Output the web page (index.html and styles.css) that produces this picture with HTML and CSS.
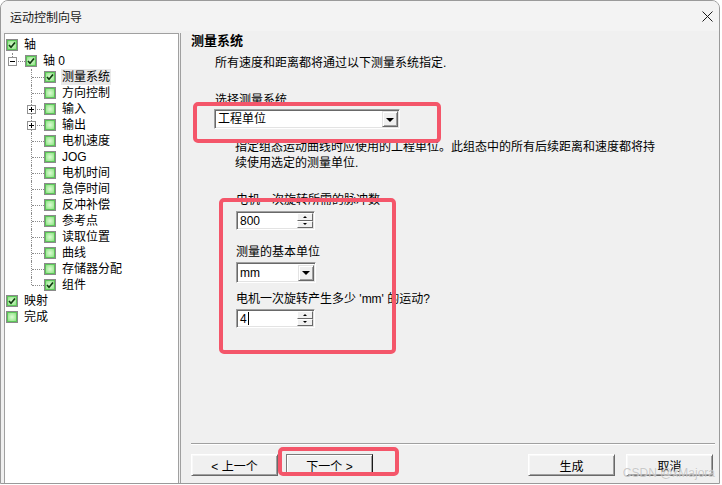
FILE: index.html
```html
<!DOCTYPE html>
<html lang="zh-CN">
<head>
  <meta charset="UTF-8" />
  <title>运动控制向导</title>
  <link rel="stylesheet" href="styles.css">
</head>
<body>
  <div class="window">
    <div class="titlebar">
      <span class="title">运动控制向导</span>
      <svg class="close" width="11" height="11" viewBox="0 0 11 11">
        <path d="M0.5 0.5 L10.5 10.5 M10.5 0.5 L0.5 10.5" stroke="#1a1a1a" stroke-width="1" fill="none"/>
      </svg>
    </div>

    <div class="client">
      <div class="tree">
        <div class="row">
          <span class="chk on"><svg width="8" height="8" viewBox="0 0 8 8"><polyline points="1,4 3,6.2 7,1.5" stroke="#103a10" stroke-width="1.7" fill="none"/></svg></span>
          <span class="label">轴</span>
        </div>
        <div class="row">
          <span class="guide end"><span class="expander"></span></span>
          <span class="chk on"><svg width="8" height="8" viewBox="0 0 8 8"><polyline points="1,4 3,6.2 7,1.5" stroke="#103a10" stroke-width="1.7" fill="none"/></svg></span>
          <span class="label">轴 0</span>
        </div>
        <div class="row">
          <span class="guide"></span><span class="guide tee"></span>
          <span class="chk on"><svg width="8" height="8" viewBox="0 0 8 8"><polyline points="1,4 3,6.2 7,1.5" stroke="#103a10" stroke-width="1.7" fill="none"/></svg></span>
          <span class="label selected">测量系统</span>
        </div>
        <div class="row">
          <span class="guide"></span><span class="guide tee"></span>
          <span class="chk"></span><span class="label">方向控制</span>
        </div>
        <div class="row">
          <span class="guide"></span><span class="guide tee"><span class="expander plus"></span></span>
          <span class="chk"></span><span class="label">输入</span>
        </div>
        <div class="row">
          <span class="guide"></span><span class="guide tee"><span class="expander plus"></span></span>
          <span class="chk"></span><span class="label">输出</span>
        </div>
        <div class="row">
          <span class="guide"></span><span class="guide tee"></span>
          <span class="chk"></span><span class="label">电机速度</span>
        </div>
        <div class="row">
          <span class="guide"></span><span class="guide tee"></span>
          <span class="chk"></span><span class="label">JOG</span>
        </div>
        <div class="row">
          <span class="guide"></span><span class="guide tee"></span>
          <span class="chk"></span><span class="label">电机时间</span>
        </div>
        <div class="row">
          <span class="guide"></span><span class="guide tee"></span>
          <span class="chk"></span><span class="label">急停时间</span>
        </div>
        <div class="row">
          <span class="guide"></span><span class="guide tee"></span>
          <span class="chk"></span><span class="label">反冲补偿</span>
        </div>
        <div class="row">
          <span class="guide"></span><span class="guide tee"></span>
          <span class="chk"></span><span class="label">参考点</span>
        </div>
        <div class="row">
          <span class="guide"></span><span class="guide tee"></span>
          <span class="chk"></span><span class="label">读取位置</span>
        </div>
        <div class="row">
          <span class="guide"></span><span class="guide tee"></span>
          <span class="chk"></span><span class="label">曲线</span>
        </div>
        <div class="row">
          <span class="guide"></span><span class="guide tee"></span>
          <span class="chk"></span><span class="label">存储器分配</span>
        </div>
        <div class="row">
          <span class="guide"></span><span class="guide end"></span>
          <span class="chk on"><svg width="8" height="8" viewBox="0 0 8 8"><polyline points="1,4 3,6.2 7,1.5" stroke="#103a10" stroke-width="1.7" fill="none"/></svg></span>
          <span class="label">组件</span>
        </div>
        <div class="row">
          <span class="chk on"><svg width="8" height="8" viewBox="0 0 8 8"><polyline points="1,4 3,6.2 7,1.5" stroke="#103a10" stroke-width="1.7" fill="none"/></svg></span>
          <span class="label">映射</span>
        </div>
        <div class="row">
          <span class="chk"></span><span class="label">完成</span>
        </div>
      </div>

      <div class="page">
        <h1 class="page-title">测量系统</h1>
        <p class="intro">所有速度和距离都将通过以下测量系统指定.</p>

        <div class="field-label first">选择测量系统</div>
        <div class="combo wide">
          <span>工程单位</span>
          <span class="combo-btn"></span>
        </div>

        <p class="hint">指定组态运动曲线时应使用的工程单位。此组态中的所有后续距离和速度都将持<br>续使用选定的测量单位.</p>

        <div class="units">
          <div class="field-label pulses">电机一次旋转所需的脉冲数</div>
          <div class="spin">
            <span>800</span>
            <span class="spin-btns"><span class="up"></span><span class="down"></span></span>
          </div>

          <div class="field-label base">测量的基本单位</div>
          <div class="combo small">
            <span>mm</span>
            <span class="combo-btn"></span>
          </div>

          <div class="field-label travel">电机一次旋转产生多少 'mm' 的运动?</div>
          <div class="spin">
            <span>4</span><span class="caret"></span>
            <span class="spin-btns"><span class="up"></span><span class="down"></span></span>
          </div>
        </div>

        <div class="footer">
          <div class="separator"></div>
          <div class="buttons">
            <button class="btn">&lt; 上一个</button>
            <button class="btn default">下一个 &gt;</button>
            <span class="fill"></span>
            <button class="btn">生成</button>
            <button class="btn cancel">取消</button>
          </div>
        </div>

        <!-- annotation boxes drawn over the dialog -->
        <div class="mark mark-system"></div>
        <div class="mark mark-units"></div>
        <div class="mark mark-next"></div>
      </div>
    </div>

    <div class="watermark">CSDN @xMajora</div>
  </div>
</body>
</html>
```

FILE: styles.css
```css
* {
  box-sizing: border-box;
}

html, body {
  margin: 0;
  padding: 0;
  background-color: #fff;
}

body {
  font-family: "Liberation Sans", "Noto Sans CJK SC", sans-serif;
  font-size: 12px;
  color: #000;
}

.window {
  position: relative;
  width: 720px;
  height: 484px;
  border: 1px solid #9a9a9a;
  border-radius: 8px 8px 0 0;
  background-color: #f0f0f0;
  display: flex;
  flex-direction: column;
  overflow: hidden;
}

.titlebar {
  height: 30px;
  flex: none;
  background-color: #f3f3f3;
  display: flex;
  align-items: center;
  justify-content: space-between;
  padding: 0 6px 0 9px;
}

.title {
  font-size: 12px;
  color: #1a1a1a;
}

.close {
  display: block;
}

.client {
  flex: 1;
  display: flex;
  min-height: 0;
}

/* tree on the left */
.tree {
  width: 175px;
  flex: none;
  margin: 2px 1px 0 3px;
  padding-top: 3px;
  background-color: #fff;
  border: 1px solid #a0a0a0;
  border-bottom: none;
}

.row {
  display: flex;
  align-items: center;
  height: 16px;
  padding-left: 1px;
}

.guide {
  position: relative;
  width: 19px;
  height: 16px;
  flex: none;
}

.guide.tee::before,
.guide.end::before {
  content: "";
  position: absolute;
  left: 6px;
  top: 0;
  bottom: 0;
  border-left: 1px dotted #8c8c8c;
}

.guide.end::before {
  bottom: 8px;
}

.guide.tee::after,
.guide.end::after {
  content: "";
  position: absolute;
  left: 7px;
  top: 8px;
  width: 12px;
  border-top: 1px dotted #8c8c8c;
}

.expander {
  position: absolute;
  left: 2px;
  top: 4px;
  width: 9px;
  height: 9px;
  border: 1px solid #919191;
  background-color: #fff;
  z-index: 1;
}

.expander::before {
  content: "";
  position: absolute;
  left: 1px;
  top: 3px;
  width: 5px;
  height: 1px;
  background-color: #000;
}

.expander.plus::after {
  content: "";
  position: absolute;
  left: 3px;
  top: 1px;
  width: 1px;
  height: 5px;
  background-color: #000;
}

.chk {
  width: 12px;
  height: 12px;
  flex: none;
  border: 1px solid #8a8a8a;
  background: radial-gradient(circle, #dcfbd4 0, #a6eb9c 55%, #6fd665 100%);
  box-shadow: inset 0 0 0 1px #5cc459;
  display: flex;
  align-items: center;
  justify-content: center;
}

.chk svg {
  display: block;
}

.label {
  margin-left: 5px;
  padding: 0 1px;
  line-height: 16px;
  white-space: nowrap;
}

.label.selected {
  background-color: #e9e9e9;
}

/* page on the right */
.page {
  position: relative;
  flex: 1;
  margin-top: 2px;
  border-left: 1px solid #a0a0a0;
  padding: 0 4px 7px 10px;
  display: flex;
  flex-direction: column;
}

.page-title {
  margin: 0;
  font-size: 13px;
  font-weight: bold;
  line-height: 15px;
}

.intro {
  margin: 7px 0 0 24px;
  line-height: 16px;
}

.field-label {
  line-height: 16px;
  white-space: nowrap;
}

.field-label.first {
  margin: 21px 0 0 24px;
}

.hint {
  margin: 10px 0 0 44px;
  line-height: 16px;
}

.units {
  margin-left: 45px;
}

.field-label.pulses {
  margin-top: 21px;
}

.field-label.base {
  margin-top: 14px;
}

.field-label.travel {
  margin-top: 8px;
}

.combo,
.spin {
  display: flex;
  align-items: center;
  background-color: #fff;
  border: 1px solid;
  border-color: #a0a0a0 #fff #fff #a0a0a0;
  box-shadow: inset 1px 1px 0 #696969, inset -1px -1px 0 #e3e3e3;
  padding-left: 3px;
  line-height: 14px;
}

.combo.wide {
  width: 186px;
  height: 20px;
  margin: 1px 0 0 23px;
}

.combo.small {
  width: 80px;
  height: 21px;
  margin-top: 2px;
}

.spin {
  width: 79px;
  height: 19px;
  margin-top: 3px;
}

.field-label.travel + .spin {
  margin-top: 2px;
}

.combo-btn {
  margin-left: auto;
  margin-right: 1px;
  width: 16px;
  height: 16px;
  flex: none;
  background-color: #f0f0f0;
  border: 1px solid;
  border-color: #e3e3e3 #696969 #696969 #e3e3e3;
  box-shadow: inset 1px 1px 0 #fff, inset -1px -1px 0 #a0a0a0;
  display: flex;
  align-items: center;
  justify-content: center;
}

.combo-btn::before {
  content: "";
  border-left: 4px solid transparent;
  border-right: 4px solid transparent;
  border-top: 4px solid #000;
  margin-top: 1px;
}

.caret {
  width: 1px;
  height: 13px;
  background-color: #000;
  margin-left: 1px;
}

.spin-btns {
  margin-left: auto;
  margin-right: 1px;
  width: 16px;
  height: 15px;
  flex: none;
  display: flex;
  flex-direction: column;
}

.spin-btns span {
  flex: 1;
  background-color: #f0f0f0;
  border: 1px solid;
  border-color: #fff #696969 #696969 #fff;
  display: flex;
  align-items: center;
  justify-content: center;
}

.spin-btns .up::before {
  content: "";
  border-left: 2px solid transparent;
  border-right: 2px solid transparent;
  border-bottom: 2px solid #000;
}

.spin-btns .down::before {
  content: "";
  border-left: 2px solid transparent;
  border-right: 2px solid transparent;
  border-top: 2px solid #000;
}

.footer {
  margin-top: auto;
}

.separator {
  height: 2px;
  border-top: 1px solid #a0a0a0;
  border-bottom: 1px solid #fff;
}

.buttons {
  display: flex;
  margin-top: 9px;
  padding-right: 2px;
}

.fill {
  flex: 1;
}

.btn {
  width: 87px;
  height: 22px;
  padding: 0;
  font: inherit;
  color: #000;
  background-color: #f0f0f0;
  border: 1px solid;
  border-color: #fff #696969 #696969 #fff;
  box-shadow: inset 1px 1px 0 #f8f8f8, inset -1px -1px 0 #a0a0a0;
}

.btn.default {
  margin-left: 8px;
  border-color: #7a7a7a #1a1a1a #1a1a1a #7a7a7a;
  box-shadow: inset 1px 1px 0 #fff, inset -1px -1px 0 #a0a0a0;
}

.btn.cancel {
  margin-left: 11px;
}

.mark {
  position: absolute;
  border: 4px solid #f4566a;
  border-radius: 5px;
  pointer-events: none;
}

.mark-system {
  left: 12px;
  top: 69px;
  width: 248px;
  height: 41px;
}

.mark-units {
  left: 38px;
  top: 165px;
  width: 177px;
  height: 156px;
}

.mark-next {
  left: 97px;
  top: 414px;
  width: 121px;
  height: 29px;
}

.watermark {
  position: absolute;
  right: 4px;
  bottom: 3px;
  font-size: 12px;
  color: rgba(150, 150, 150, 0.5);
  text-shadow: 0 0 1px #fff;
}
```
